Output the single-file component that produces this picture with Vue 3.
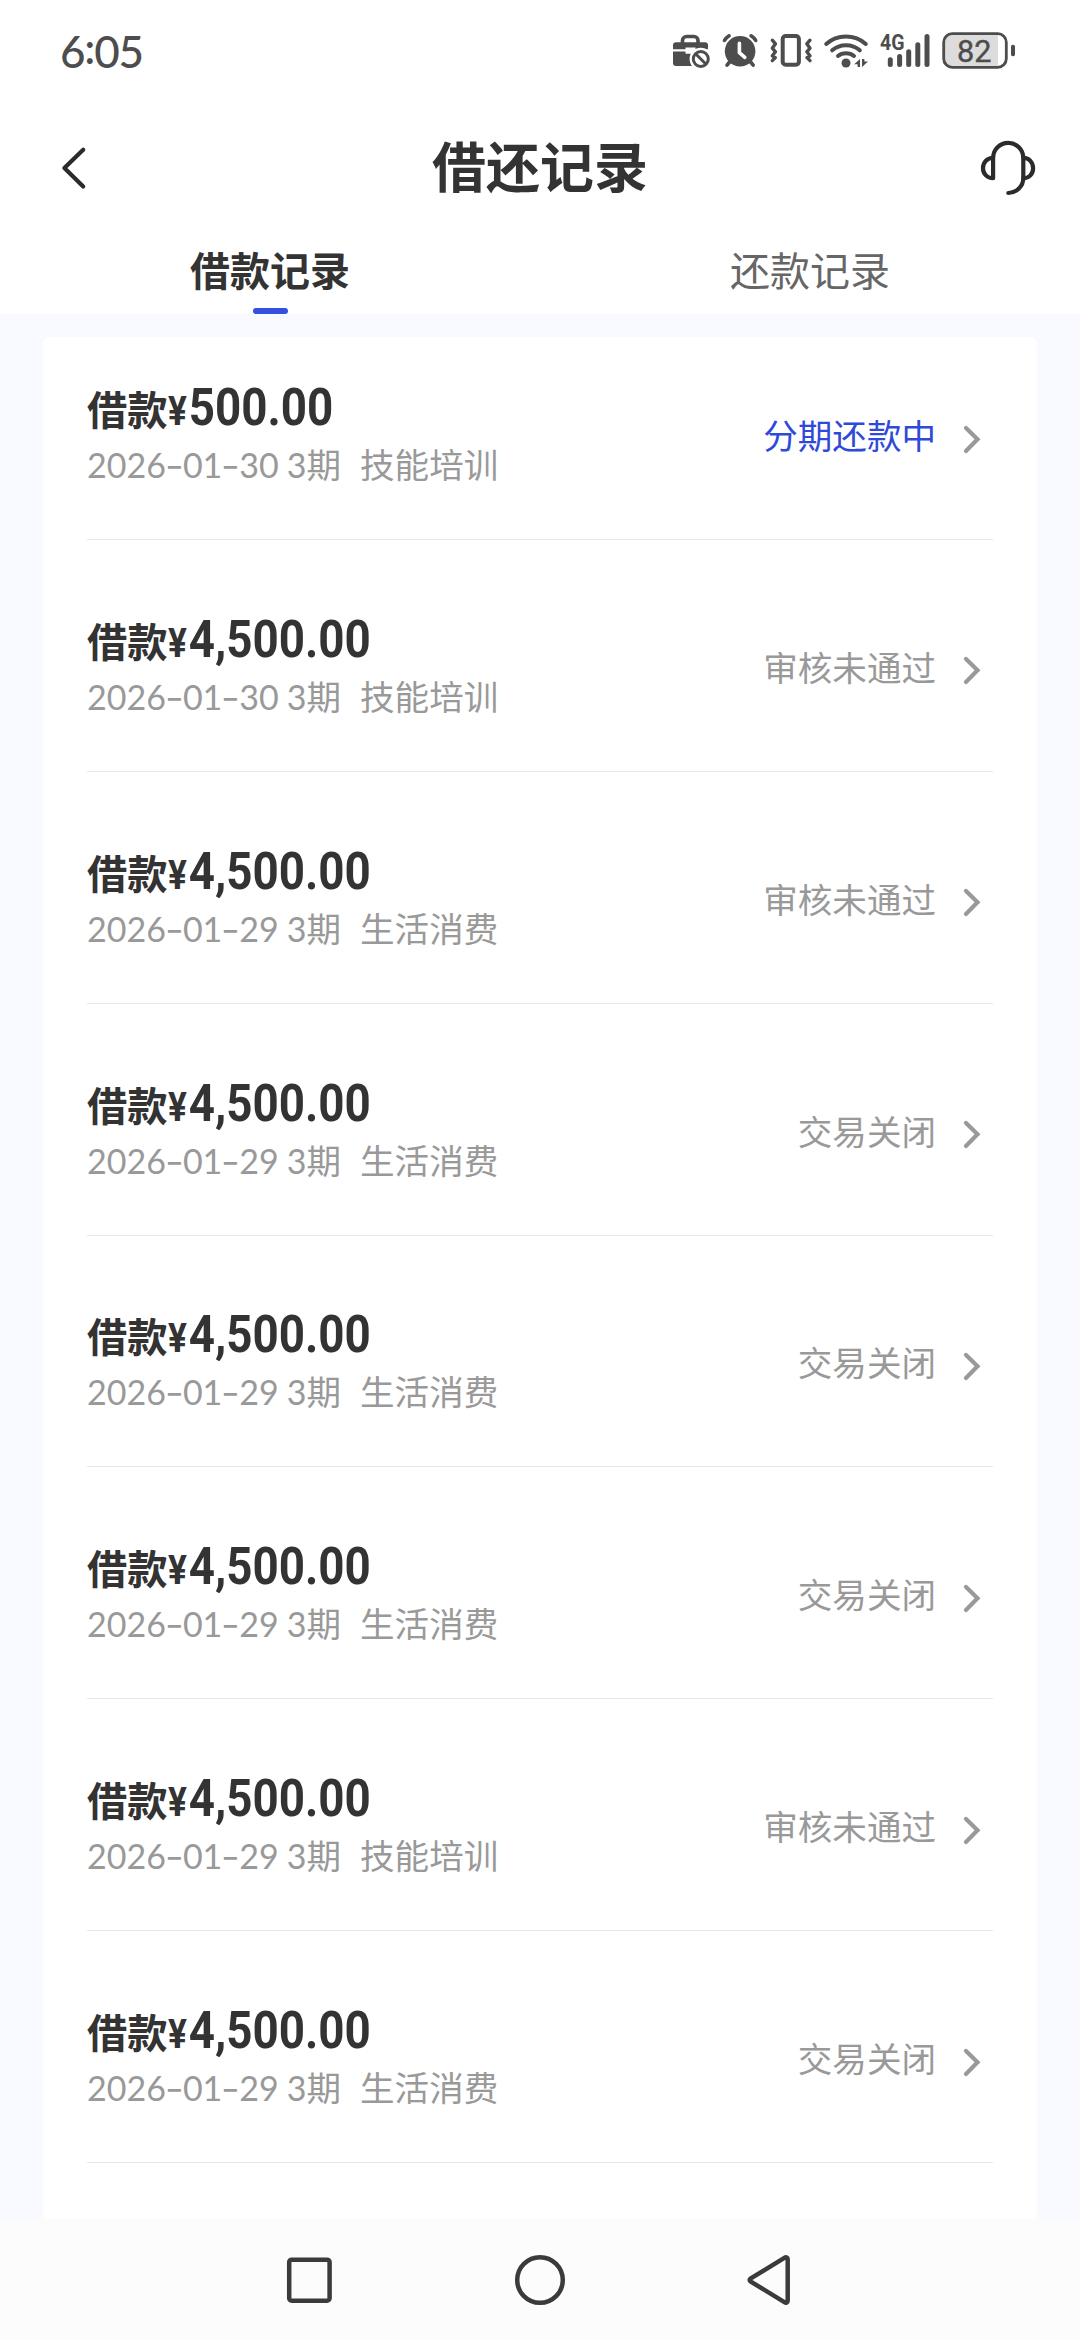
<script setup>
const records = [
  { amount: '500.00', date: '2026-01-30', use: '技能培训', status: '分期还款中', active: true },
  { amount: '4,500.00', date: '2026-01-30', use: '技能培训', status: '审核未通过' },
  { amount: '4,500.00', date: '2026-01-29', use: '生活消费', status: '审核未通过' },
  { amount: '4,500.00', date: '2026-01-29', use: '生活消费', status: '交易关闭' },
  { amount: '4,500.00', date: '2026-01-29', use: '生活消费', status: '交易关闭' },
  { amount: '4,500.00', date: '2026-01-29', use: '生活消费', status: '交易关闭' },
  { amount: '4,500.00', date: '2026-01-29', use: '技能培训', status: '审核未通过' },
  { amount: '4,500.00', date: '2026-01-29', use: '生活消费', status: '交易关闭' }
]
const signalBars = [
  [890.3, 57.3], [899.6, 54], [908.7, 49.3], [917.8, 42.3], [927, 34]
]
</script>

<template>
  <div class="screen">
    <div class="statusbar">
      <div class="clock">6<span class="colon">:</span>05</div>
      <div class="indicators">
        <svg width="48" height="44" viewBox="670 30 48 44">
          <path d="M682.5 44v-3.5a4 4 0 0 1 4-4h7.5a4 4 0 0 1 4 4V44" fill="none" stroke="#4d4d4d" stroke-width="3.6" />
          <path d="M676 42.3h29a3 3 0 0 1 3 3v3.9H695.5v-1.6h-10v1.6H673v-3.9a3 3 0 0 1 3-3z" fill="#4d4d4d" />
          <path d="M673 51.6h12.5v2.2h10v-2.2h12.5V63a3 3 0 0 1-3 3h-29a3 3 0 0 1-3-3z" fill="#4d4d4d" />
          <circle cx="700.8" cy="59" r="11.2" fill="#fff" />
          <circle cx="700.8" cy="59" r="7.5" fill="none" stroke="#4d4d4d" stroke-width="3" />
          <path d="M695.8 54l10 10" stroke="#4d4d4d" stroke-width="3" />
        </svg>
        <svg width="46" height="44" viewBox="718 30 46 44">
          <circle cx="740.1" cy="51.3" r="15.3" fill="#4d4d4d" />
          <path d="M724.5 40.4q1.8-2.8 4.6-4.6M755.7 40.4q-1.8-2.8-4.6-4.6M730 61.5l-3 3.7M750.2 61.5l3 3.7" fill="none" stroke="#4d4d4d" stroke-width="3.6" stroke-linecap="round" />
          <path d="M739.4 43.3v9.4l5.4 4.7" fill="none" stroke="#fff" stroke-width="3.6" stroke-linecap="round" stroke-linejoin="round" />
        </svg>
        <svg width="54" height="44" viewBox="764 30 54 44">
          <rect x="782.7" y="36" width="16.2" height="28.8" rx="3" fill="none" stroke="#4d4d4d" stroke-width="4" />
          <path d="M772.3 40.2l3.2 3.6-3.2 4.4 3.2 3.6-3.2 4 3 1.8-3 3M810 40.2l-3.2 3.6 3.2 4.4-3.2 3.6 3.2 4-3 1.8 3 3" fill="none" stroke="#4d4d4d" stroke-width="3.4" stroke-linecap="round" stroke-linejoin="round" />
        </svg>
        <svg width="58" height="44" viewBox="818 30 58 44">
          <g fill="none" stroke="#4d4d4d" stroke-width="4" stroke-linecap="round">
            <path d="M826.2 44c11-10 28.6-10 39.6 0" />
            <path d="M832.2 50.3c7.6-6.8 20-6.8 27.6 0" />
            <path d="M838 56c4.5-3.8 11.5-3.8 16 0" />
          </g>
          <circle cx="846" cy="63" r="4.5" fill="#4d4d4d" />
          <path d="M860 59v8h-2.4v-2.8h-3.4zM862 59h2.4v2.6h3.6l-6 5.4z" fill="#4d4d4d" />
        </svg>
        <svg width="60" height="44" viewBox="876 30 60 44">
          <text x="880" y="50" class="network" textLength="24.5" lengthAdjust="spacingAndGlyphs">4G</text>
          <path v-for="bar in signalBars" :key="bar[0]" :d="`M${bar[0]} ${bar[1] + 2.5}V64.5`" stroke="#4d4d4d" stroke-width="5" stroke-linecap="round" />
        </svg>
        <svg width="84" height="44" viewBox="936 30 84 44">
          <path d="M953 34H998V67H953a9 9 0 0 1-9-9V43a9 9 0 0 1 9-9z" fill="#dcdcdc" />
          <rect x="943.7" y="33.7" width="62.6" height="33.6" rx="8.5" fill="none" stroke="#4d4d4d" stroke-width="2.8" />
          <rect x="1011" y="44.7" width="4" height="11.6" rx="1.8" fill="#4d4d4d" />
          <text x="957" y="61.6" class="level" textLength="34.5" lengthAdjust="spacingAndGlyphs">82</text>
        </svg>
      </div>
    </div>

    <header class="header">
      <svg class="back" width="40" height="60" viewBox="54 138 40 60">
        <path d="M83.2 149.7L64.4 168l18.8 18.5" fill="none" stroke="#2b2b2b" stroke-width="4.2" stroke-linecap="round" stroke-linejoin="round" />
      </svg>
      <h1 class="title">借还记录</h1>
      <svg class="service" width="60" height="60" viewBox="978 137 60 60">
        <g fill="none" stroke="#2b2b2b" stroke-width="4.2" stroke-linecap="round" stroke-linejoin="round">
          <path d="M993.1 177V156.9a15.1 15.1 0 0 1 30.2 0V177a15 15 0 0 1-15 15" />
          <path d="M993 156.8c-5.6 0-10 4.6-10 10.4s4.4 10 10 10M1023.5 156.8c5.6 0 9.6 4.6 9.6 10.4s-4 10-9.6 10" />
        </g>
      </svg>
    </header>

    <nav class="tabs">
      <div class="tab active">借款记录</div>
      <div class="tab">还款记录</div>
    </nav>

    <main class="content">
      <section class="card">
        <article v-for="(r, i) in records" :key="i" class="record">
          <div class="info">
            <div class="amount">借款<span class="figure"><span class="yen">¥</span>{{ r.amount }}</span></div>
            <div class="detail">
              <span class="date"><template v-for="(part, p) in r.date.split('-')" :key="p"><span v-if="p" class="dash">-</span>{{ part }}</template></span>
              <span class="term"><span class="count">3</span>期</span>
              <span class="use">{{ r.use }}</span>
            </div>
          </div>
          <div class="status" :class="{ repaying: r.active }">
            <span>{{ r.status }}</span>
            <svg class="chevron" width="20" height="32" viewBox="0 0 20 32">
              <path d="M4 5l11.5 11.3L4 28" fill="none" stroke="#999" stroke-width="4.2" stroke-linecap="round" />
            </svg>
          </div>
        </article>
      </section>
    </main>

    <footer class="navbar">
      <svg width="230" height="60" viewBox="195 2250 230 60">
        <rect x="289.2" y="2259.7" width="40.4" height="41" rx="2.5" />
      </svg>
      <svg width="230" height="60" viewBox="425 2250 230 60">
        <circle cx="540" cy="2280" r="22.8" />
      </svg>
      <svg width="230" height="60" viewBox="655 2250 230 60">
        <path d="M750.4 2278.6a1.7 1.7 0 0 0 0 2.8l34.4 21a1.9 1.9 0 0 0 2.9-1.6v-41.6a1.9 1.9 0 0 0-2.9-1.6z" />
      </svg>
    </footer>
  </div>
</template>

<style>
body {
  background: #fff;
}
</style>

<style scoped>
.screen {
  width: 1080px;
  height: 2340px;
  display: flex;
  flex-direction: column;
  overflow: hidden;
  background: #fff;
  color: #333;
  font-family: "Noto Sans CJK SC", sans-serif;
}
.statusbar {
  height: 104px;
  flex: none;
  box-sizing: border-box;
  padding: 30px 60px 0 60px;
  display: flex;
  justify-content: space-between;
  align-items: flex-start;
  color: #4d4d4d;
}
.clock {
  margin-top: -1px;
  font: 500 44px/44px Lato, sans-serif;
  letter-spacing: -1.2px;
}
.colon {
  position: relative;
  top: -4px;
}
.indicators {
  display: flex;
}
.network {
  font: bold 22px Roboto, sans-serif;
  fill: #4d4d4d;
}
.level {
  font: 400 31.5px Roboto, sans-serif;
  fill: #4d4d4d;
  stroke: #4d4d4d;
  stroke-width: 0.4px;
}
.header {
  height: 128px;
  flex: none;
  box-sizing: border-box;
  padding: 0 42px 0 54px;
  display: flex;
  justify-content: space-between;
  align-items: center;
}
.title {
  margin: -6px 0 0 8px;
  font-size: 54px;
  line-height: 80px;
  font-weight: 700;
}
.tabs {
  height: 82px;
  flex: none;
  display: flex;
}
.tab {
  flex: 1;
  display: flex;
  flex-direction: column;
  align-items: center;
  justify-content: space-between;
  padding-top: 7px;
  font-size: 40px;
  line-height: 60px;
  color: #666;
}
.tab.active {
  color: #333;
  font-weight: 700;
}
.tab.active::after {
  content: "";
  width: 35px;
  height: 6px;
  border-radius: 3px;
  background: #3450e0;
}
.content {
  flex: 1;
  min-height: 0;
  overflow: hidden;
  padding: 23px 43px 0;
  background: #f9faff;
}
.card {
  height: 1900px;
  padding: 0 44px;
  border-radius: 7px;
  background: #fff;
}
.record {
  box-sizing: border-box;
  height: 231.86px;
  display: flex;
  justify-content: space-between;
  align-items: flex-end;
  border-bottom: 1px solid #e8e8e8;
}
.record:first-child {
  height: 203px;
}
.info {
  padding-bottom: 56px;
}
.amount {
  display: flex;
  align-items: baseline;
  height: 56px;
  margin-bottom: 7px;
  font-size: 40.3px;
  line-height: 56px;
  font-weight: 700;
}
.figure {
  font-family: Roboto, sans-serif;
  font-size: 52px;
  transform: scaleX(0.88);
  transform-origin: left;
}
.yen {
  margin-right: 2px;
  font-size: 40px;
}
.detail {
  display: flex;
  align-items: baseline;
  height: 40px;
  font-size: 34.56px;
  line-height: 40px;
  color: #999;
}
.date,
.count {
  font-family: Lato, sans-serif;
  font-size: 34px;
}
.dash {
  display: inline-block;
  width: 17px;
  text-align: center;
  font-family: Inter, sans-serif;
  transform: scaleX(1.2);
}
.term {
  margin-left: 8px;
}
.use {
  margin-left: 19px;
}
.status {
  display: flex;
  align-items: center;
  height: 40px;
  padding-bottom: 85px;
  margin-right: 11px;
  font-size: 34.56px;
  line-height: 40px;
  color: #999;
}
.status.repaying {
  color: #2f4ad8;
}
.chevron {
  margin: 9px 0 0 26px;
}
.navbar {
  height: 121px;
  flex: none;
  display: flex;
  justify-content: center;
  align-items: center;
  background: #fcfcfc;
}
.navbar svg {
  fill: none;
  stroke: #3b3b3b;
  stroke-width: 4.5;
}
</style>
